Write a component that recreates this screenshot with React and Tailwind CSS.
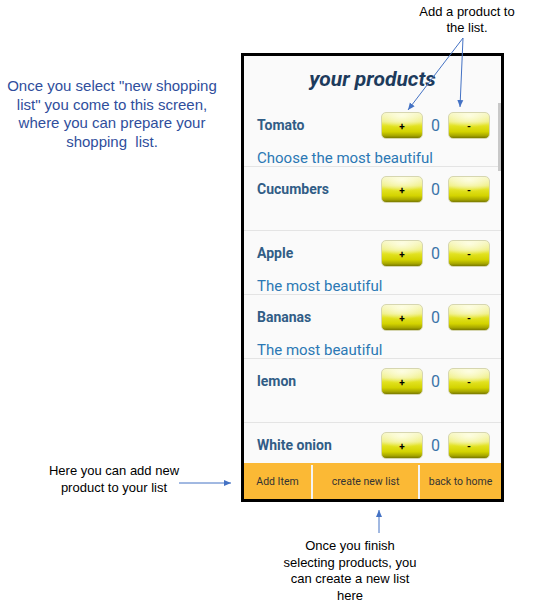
import React from 'react';

const PRODUCTS = [
  { name: 'Tomato', note: 'Choose the most beautiful' },
  { name: 'Cucumbers', note: '' },
  { name: 'Apple', note: 'The most beautiful' },
  { name: 'Bananas', note: 'The most beautiful' },
  { name: 'lemon', note: '' },
  { name: 'White onion', note: '' },
];

const GlossButton = ({ label }) => (
  <div className="flex h-[27px] w-[42px] items-center justify-center rounded-[5px] border border-[#d6d6b0] bg-[radial-gradient(ellipse_85%_65%_at_50%_10%,rgba(255,255,235,0.85),rgba(255,255,235,0)_75%),linear-gradient(180deg,#f6f6c0_0%,#efef80_35%,#e2e220_52%,#d3d300_75%,#a8a800_90%,#7a7a00_100%)]">
    <span className="mt-[3px] text-[10px] font-bold leading-none text-black">{label}</span>
  </div>
);

const ProductRow = ({ name, note }) => (
  <div className="h-[64px] border-b border-[#e4e4e4]">
    <div className="flex items-center pl-[13px] pr-[11px] pt-[9px]">
      <span className="flex-1 text-[14px] font-bold text-[#315d86]">{name}</span>
      <GlossButton label="+" />
      <span className="w-[25px] text-center text-[16px] text-[#3b74a8]">0</span>
      <GlossButton label="-" />
    </div>
    {note && (
      <p className="mt-[10px] pl-[13px] text-[15px] leading-[18px] text-[#2b78b4]">{note}</p>
    )}
  </div>
);

const App = () => {
  return (
    <div className="relative flex h-[605px] w-[535px] overflow-hidden bg-white font-['Liberation_Sans',Arial,sans-serif]">

      {/* left notes */}
      <div className="flex w-[241px] flex-col">
        <p className="mt-[77px] w-[224px] text-center text-[15px] leading-[18.5px] text-[#2f4e9c]">
          Once you select "new shopping list" you come to this screen, where you can prepare your shopping&nbsp; list.
        </p>
        <p className="mt-[311px] w-[228px] text-center text-[13px] leading-[17px] text-black">
          Here you can add new<br />product to your list
        </p>
      </div>

      {/* phone + notes */}
      <div className="flex w-[294px] flex-col">
        <div className="h-[53px] pt-[4px]">
          <p className="ml-[171px] w-[110px] text-center text-[13px] leading-[16px] text-black">
            Add a product to<br />the list.
          </p>
        </div>

        <div className="flex h-[449px] w-[263px] flex-col overflow-hidden border-[3px] border-black bg-[#fafafa] font-['Roboto',sans-serif]">
          <div className="flex h-[47px] items-center justify-center">
            <h1 className="text-[21px] font-bold italic text-[#1d3b5c]">your products</h1>
          </div>

          <div className="relative h-[360px] overflow-hidden">
            {PRODUCTS.map((p) => (
              <ProductRow key={p.name} name={p.name} note={p.note} />
            ))}
            <div className="absolute right-0 top-0 h-[68px] w-[3px] bg-[#c8c8c8]" />
          </div>

          <div className="flex h-[36px] bg-[#fbb935] pt-[2px] text-[10.5px] text-[#333]">
            <div className="flex w-[67px] items-center justify-center">Add Item</div>
            <div className="w-[2px] bg-[#f4f4f4]" />
            <div className="flex w-[105px] items-center justify-center">create new list</div>
            <div className="w-[2px] bg-[#f4f4f4]" />
            <div className="flex flex-1 items-center justify-center">back to home</div>
          </div>
        </div>

        <p className="ml-[34px] mt-[36px] w-[150px] text-center text-[13px] leading-[16.5px] text-black">
          Once you finish<br />selecting products, you<br />can create a new list<br />here
        </p>
      </div>

      {/* arrows */}
      <svg className="pointer-events-none absolute inset-0" width="535" height="605">
        <defs>
          <marker id="head" markerWidth="8" markerHeight="8" refX="7" refY="4" orient="auto" markerUnits="userSpaceOnUse">
            <path d="M0,1 L7,4 L0,7 Z" fill="#4472c4" />
          </marker>
        </defs>
        <g stroke="#4472c4" strokeWidth="1" fill="none">
          <line x1="463" y1="38" x2="408" y2="110" markerEnd="url(#head)" />
          <line x1="463" y1="38" x2="460" y2="107" markerEnd="url(#head)" />
          <line x1="179" y1="483" x2="231" y2="483" markerEnd="url(#head)" />
          <line x1="379" y1="533" x2="379" y2="510" markerEnd="url(#head)" />
        </g>
      </svg>
    </div>
  );
};

export default App;
